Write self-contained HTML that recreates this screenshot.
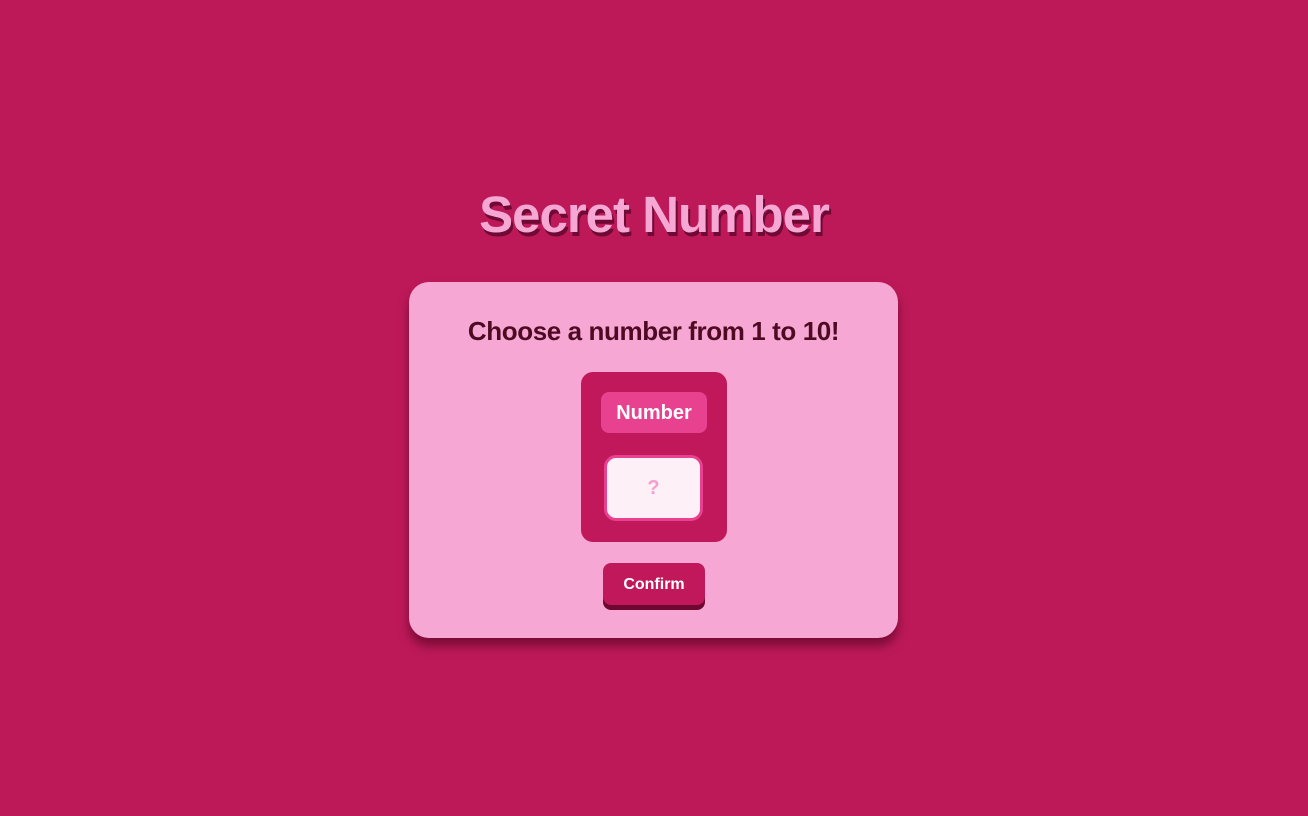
<!DOCTYPE html>
<html><head><style>
html,body{margin:0;padding:0;width:1308px;height:816px;background:#bd1959;overflow:hidden;font-family:"Liberation Sans",sans-serif;}
.title{position:absolute;left:0;width:1308px;top:185px;text-align:center;font-size:51px;font-weight:bold;color:#f6a7d3;letter-spacing:-1px;text-shadow:2px 4px 0 #6e0a33;}
.card{position:absolute;left:409px;top:282px;width:489px;height:356px;background:#f7a7d4;border-radius:20px;box-shadow:0 8px 10px rgba(70,0,25,.55);}
.h{position:absolute;left:0;width:489px;top:34px;text-align:center;font-size:26px;font-weight:bold;color:#4e0a22;letter-spacing:-0.4px;}
.box{position:absolute;left:172px;top:90px;width:146px;height:170px;background:#c0185a;border-radius:12px;}
.lab{position:absolute;left:20px;top:20px;width:106px;height:41px;background:#e8418f;border-radius:8px;color:#fff;font-weight:bold;font-size:20px;text-align:center;line-height:43px;}
.inp{position:absolute;left:23px;top:83px;width:93px;height:60px;background:#fdf0f6;border:3px solid #e8418f;border-radius:12px;color:#f3a0cc;font-size:20px;text-align:center;line-height:60px;font-weight:bold;}
.btn{position:absolute;left:194px;top:281px;width:102px;height:42px;background:#c0185a;border-radius:8px;box-shadow:0 5px 0 #6e0830;color:#fff;font-weight:bold;font-size:16px;text-align:center;line-height:44px;}
</style></head><body>
<div class="title">Secret Number</div>
<div class="card">
<div class="h">Choose a number from 1 to 10!</div>
<div class="box"><div class="lab">Number</div><div class="inp">?</div></div>
<div class="btn">Confirm</div>
</div>
</body></html>
